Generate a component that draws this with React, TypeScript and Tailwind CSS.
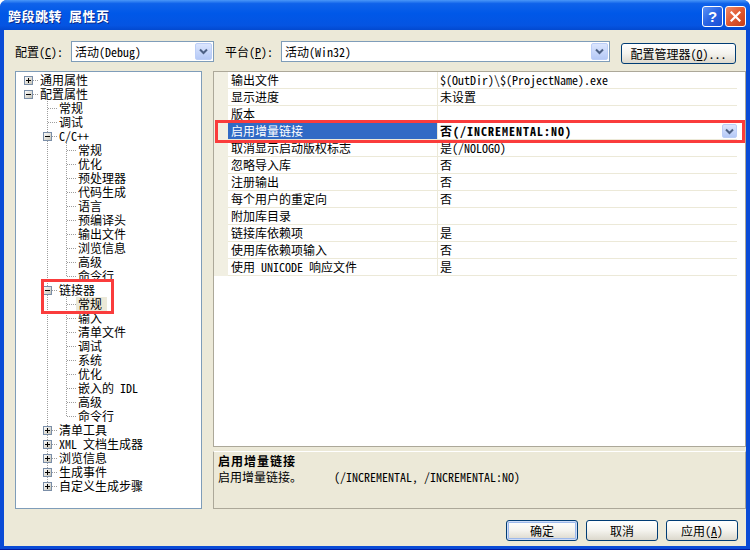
import React from "react";

type Row = { t: string; lvl: number; exp?: "+" | "-"; last?: boolean; sel?: boolean };

const treeRows: Row[] = [
  { t: "通用属性", lvl: 0, exp: "+" },
  { t: "配置属性", lvl: 0, exp: "-" },
  { t: "常规", lvl: 1 },
  { t: "调试", lvl: 1 },
  { t: "C/C++", lvl: 1, exp: "-" },
  { t: "常规", lvl: 2 },
  { t: "优化", lvl: 2 },
  { t: "预处理器", lvl: 2 },
  { t: "代码生成", lvl: 2 },
  { t: "语言", lvl: 2 },
  { t: "预编译头", lvl: 2 },
  { t: "输出文件", lvl: 2 },
  { t: "浏览信息", lvl: 2 },
  { t: "高级", lvl: 2 },
  { t: "命令行", lvl: 2, last: true },
  { t: "链接器", lvl: 1, exp: "-" },
  { t: "常规", lvl: 2, sel: true },
  { t: "输入", lvl: 2 },
  { t: "清单文件", lvl: 2 },
  { t: "调试", lvl: 2 },
  { t: "系统", lvl: 2 },
  { t: "优化", lvl: 2 },
  { t: "嵌入的 IDL", lvl: 2 },
  { t: "高级", lvl: 2 },
  { t: "命令行", lvl: 2, last: true },
  { t: "清单工具", lvl: 1, exp: "+" },
  { t: "XML 文档生成器", lvl: 1, exp: "+" },
  { t: "浏览信息", lvl: 1, exp: "+" },
  { t: "生成事件", lvl: 1, exp: "+" },
  { t: "自定义生成步骤", lvl: 1, exp: "+", last: true },
];

const props: [string, string][] = [
  ["输出文件", "$(OutDir)\\$(ProjectName).exe"],
  ["显示进度", "未设置"],
  ["版本", ""],
  ["启用增量链接", "否(/INCREMENTAL:NO)"],
  ["取消显示启动版权标志", "是(/NOLOGO)"],
  ["忽略导入库", "否"],
  ["注册输出", "否"],
  ["每个用户的重定向", "否"],
  ["附加库目录", ""],
  ["链接库依赖项", "是"],
  ["使用库依赖项输入", "否"],
  ["使用 UNICODE 响应文件", "是"],
];

const DOT = "#9E9E9E";

function GuideCell({ line }: { line: boolean }) {
  return (
    <svg width="19" height="14" className="shrink-0 block">
      {line && <line x1="8.5" y1="0" x2="8.5" y2="14" stroke={DOT} strokeDasharray="1 1" />}
    </svg>
  );
}

function OwnCell({ r }: { r: Row }) {
  return (
    <svg width="19" height="14" className="shrink-0 block">
      <defs>
        <linearGradient id="bx" x1="0" y1="0" x2="1" y2="1">
          <stop offset="0" stopColor="#FFFFFF" />
          <stop offset="1" stopColor="#C4C1B3" />
        </linearGradient>
      </defs>
      {r.lvl > 0 && (
        <line x1="8.5" y1="0" x2="8.5" y2={r.last ? 7 : 14} stroke={DOT} strokeDasharray="1 1" />
      )}
      <line x1={r.exp ? 13 : 9} y1="7.5" x2="19" y2="7.5" stroke={DOT} strokeDasharray="1 1" />
      {r.exp && (
        <g>
          <rect x="4.5" y="3.5" width="8" height="8" fill="url(#bx)" stroke="#7A8EA8" />
          <line x1="6" y1="7.5" x2="11" y2="7.5" stroke="#000" />
          {r.exp === "+" && <line x1="8.5" y1="5" x2="8.5" y2="10" stroke="#000" />}
        </g>
      )}
    </svg>
  );
}

function Chevron() {
  return (
    <svg width="9" height="7" viewBox="0 0 9 7">
      <path d="M1 1.5 L4.5 5 L8 1.5" stroke="#4D6185" strokeWidth="2" fill="none" />
    </svg>
  );
}

function DropBtn({ small }: { small?: boolean }) {
  return (
    <div
      className={
        (small ? "w-[15px] h-[14px] " : "w-[17px] h-[17px] ") +
        "shrink-0 rounded-[2px] border border-[#BCCEF7] bg-gradient-to-b from-[#DCE6FE] to-[#B5C9F6] flex items-center justify-center"
      }
    >
      <Chevron />
    </div>
  );
}

function XpButton({ children, def, className }: { children: React.ReactNode; def?: boolean; className?: string }) {
  return (
    <div
      className={
        "h-[21px] rounded-[3px] border border-[#003C74] bg-gradient-to-b from-[#FFFFFF] via-[#F4F3EE] to-[#DCD8CC] flex items-center justify-center text-[12px] text-black whitespace-nowrap " +
        (def ? "shadow-[inset_0_0_0_1px_#CEDCF7,inset_0_0_0_2px_#9DB9EB] " : "") +
        (className || "")
      }
    >
      {children}
    </div>
  );
}

export default function App() {
  return (
    <div className="w-[750px] h-[550px] [font-family:'Noto_Sans_Mono_CJK_SC','Noto_Sans_CJK_SC',sans-serif] text-[12px] text-black bg-[#0A4BD6] rounded-t-[7px] flex flex-col overflow-hidden border-b border-[#0019A0]">
      {/* Title bar */}
      <div className="h-[30px] shrink-0 bg-[linear-gradient(to_bottom,#4A97F8_0%,#0F62EA_12%,#0058E8_45%,#0554E2_85%,#0349CF_100%)] flex items-center pl-[8px] pr-[4px]">
        <div className="flex-1 text-[13px] font-bold text-white leading-none tracking-[0.5px] [text-shadow:1px_1px_0_#0C2C8C]">
          跨段跳转 属性页
        </div>
        <div className="flex gap-[2px] mt-[2px]">
          <div className="w-[21px] h-[21px] rounded-[3px] border border-white bg-[linear-gradient(135deg,#5B93F6_0%,#2A64E3_50%,#1A4FD6_100%)] flex items-center justify-center text-white font-bold text-[15px] leading-none [font-family:'Liberation_Sans',sans-serif]">
            ?
          </div>
          <div className="w-[21px] h-[21px] rounded-[3px] border border-white bg-[linear-gradient(135deg,#F08B6A_0%,#E0582F_50%,#C43E1B_100%)] flex items-center justify-center">
            <svg width="11" height="11" viewBox="0 0 11 11">
              <path d="M1.5 1.5 L9.5 9.5 M9.5 1.5 L1.5 9.5" stroke="#fff" strokeWidth="2.2" strokeLinecap="square" />
            </svg>
          </div>
        </div>
      </div>

      {/* Body */}
      <div className="flex-1 mx-[4px] mb-[3px] bg-[#ECE9D8] flex flex-col">
        {/* Config row */}
        <div className="flex items-start pl-[11px] mt-[11px] h-[23px]">
          <div className="h-[21px] flex items-center w-[48px] whitespace-nowrap">
            配置(<span className="underline">C</span>):
          </div>
          <div className="ml-[8px] w-[143px] h-[21px] border border-[#7F9DB9] bg-white flex items-center pl-[3px] pr-[1px]">
            <span className="flex-1 whitespace-nowrap">活动(Debug)</span>
            <DropBtn />
          </div>
          <div className="ml-[11px] h-[21px] flex items-center w-[48px] whitespace-nowrap">
            平台(<span className="underline">P</span>):
          </div>
          <div className="ml-[8px] w-[329px] h-[21px] border border-[#7F9DB9] bg-white flex items-center pl-[3px] pr-[1px]">
            <span className="flex-1 whitespace-nowrap">活动(Win32)</span>
            <DropBtn />
          </div>
          <XpButton className="ml-[11px] w-[115px] mt-[2px] h-[20px]">
            配置管理器(<span className="underline">O</span>)...
          </XpButton>
        </div>

        {/* Main */}
        <div className="flex mt-[7px] h-[438px]">
          {/* Tree */}
          <div className="relative ml-[11px] w-[187px] h-full border border-[#7F9DB9] bg-white pt-[1px] pl-[4px]">
            {treeRows.map((r, i) => (
              <div key={i} className="flex h-[14px] items-center whitespace-nowrap">
                {Array.from({ length: r.lvl }).map((_, k) => (
                  <GuideCell key={k} line={k >= 1} />
                ))}
                <OwnCell r={r} />
                <span
                  className={
                    "inline-block h-[14px] leading-[14px] ml-[-1px] pl-[2px] pr-[5px] " +
                    (r.sel ? "bg-[#ECE9D8]" : "")
                  }
                >
                  {r.t}
                </span>
              </div>
            ))}
            <div className="absolute left-[25px] top-[207px] w-[73px] h-[35px] border-[3px] border-[#FA3C3C] pointer-events-none" />
          </div>

          {/* Right panel */}
          <div className="relative ml-[11px] flex-1 h-full flex flex-col">
            <div className="h-[376px] border border-[#ACA899] bg-white">
              {props.map(([n, v], i) => {
                const sel = i === 3;
                return (
                  <div key={i} className="flex h-[17px] w-[524px]">
                    <div className="w-[14px] bg-[#F1EFE2] shrink-0" />
                    <div className="w-[509px] flex border-b border-[#ECE9D8]">
                      <div
                        className={
                          "w-[210px] shrink-0 border-r border-[#ECE9D8] pl-[3px] flex items-center whitespace-nowrap leading-[16px] " +
                          (sel ? "bg-[#316AC5] text-white" : "")
                        }
                      >
                        {n}
                      </div>
                      <div className="flex-1 pl-[2px] flex items-center justify-between whitespace-nowrap leading-[16px]">
                        <span className={sel ? "font-bold tracking-[1px]" : ""}>{v}</span>
                        {sel && <DropBtn small />}
                      </div>
                    </div>
                  </div>
                );
              })}
            </div>
            <div className="h-[4px]" />
            <div className="flex-1 border border-[#ACA899] border-t-white bg-[#ECE9D8] px-[4px] pt-[1px] leading-[16px]">
              <div className="font-bold tracking-[1px]">启用增量链接</div>
              <div className="whitespace-nowrap">
                启用增量链接。<span className="ml-[32px]">(/INCREMENTAL, /INCREMENTAL:NO)</span>
              </div>
            </div>
            <div className="absolute left-[2px] top-[49px] w-[530px] h-[23px] border-[3px] border-[#FA3C3C] pointer-events-none" />
          </div>
        </div>

        {/* Buttons */}
        <div className="flex justify-end gap-[8px] pr-[8px] mt-[11px]">
          <XpButton def className="w-[72px]">确定</XpButton>
          <XpButton className="w-[72px]">取消</XpButton>
          <XpButton className="w-[72px]">
            应用(<span className="underline">A</span>)
          </XpButton>
        </div>
      </div>
    </div>
  );
}
